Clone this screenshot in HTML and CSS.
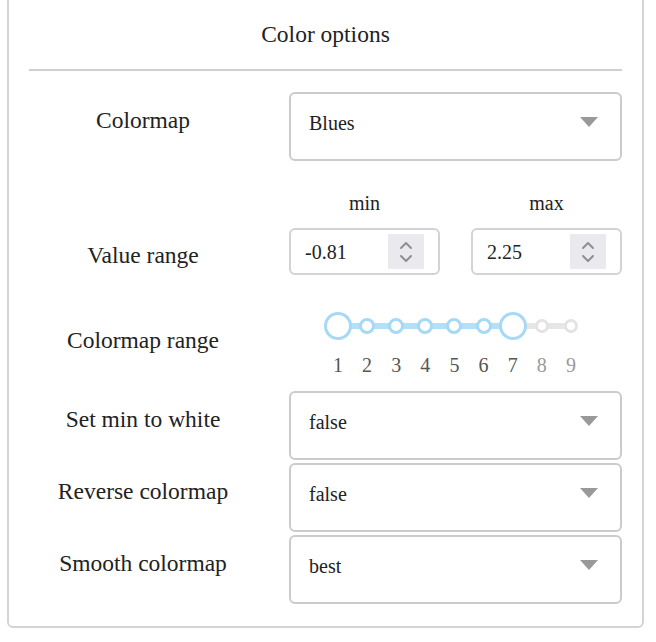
FILE: index.html
```html
<!DOCTYPE html>
<html>
<head>
<meta charset="utf-8">
<link rel="stylesheet" href="styles.css">
</head>
<body>
<div class="panel">
  <div class="title">Color options</div>
  <div class="rule"></div>

  <div class="row row-first">
    <div class="label">Colormap</div>
    <div class="select"><span class="value">Blues</span><span class="caret"></span></div>
  </div>

  <div class="row row-range">
    <div class="label label-range">Value range</div>
    <div class="pair">
      <div class="field">
        <div class="field-label">min</div>
        <div class="number"><span class="num-text">-0.81</span>
          <span class="spin"><svg width="14" height="22" viewBox="0 0 14 22"><path d="M2 7 L7 2 L12 7" fill="none" stroke="#8e8e93" stroke-width="2" stroke-linecap="round" stroke-linejoin="round"/><path d="M2 15 L7 20 L12 15" fill="none" stroke="#8e8e93" stroke-width="2" stroke-linecap="round" stroke-linejoin="round"/></svg></span>
        </div>
      </div>
      <div class="field">
        <div class="field-label">max</div>
        <div class="number"><span class="num-text">2.25</span>
          <span class="spin"><svg width="14" height="22" viewBox="0 0 14 22"><path d="M2 7 L7 2 L12 7" fill="none" stroke="#8e8e93" stroke-width="2" stroke-linecap="round" stroke-linejoin="round"/><path d="M2 15 L7 20 L12 15" fill="none" stroke="#8e8e93" stroke-width="2" stroke-linecap="round" stroke-linejoin="round"/></svg></span>
        </div>
      </div>
    </div>
  </div>

  <div class="row row-slider">
    <div class="label label-slider">Colormap range</div>
    <div class="slider">
      <div class="track"></div>
      <div class="tick"><span class="dot big"></span><span class="n">1</span></div>
      <div class="tick"><span class="dot"></span><span class="n">2</span></div>
      <div class="tick"><span class="dot"></span><span class="n">3</span></div>
      <div class="tick"><span class="dot"></span><span class="n">4</span></div>
      <div class="tick"><span class="dot"></span><span class="n">5</span></div>
      <div class="tick"><span class="dot"></span><span class="n">6</span></div>
      <div class="tick"><span class="dot big"></span><span class="n">7</span></div>
      <div class="tick off"><span class="dot"></span><span class="n">8</span></div>
      <div class="tick off"><span class="dot"></span><span class="n">9</span></div>
    </div>
  </div>

  <div class="row row-after-slider">
    <div class="label">Set min to white</div>
    <div class="select"><span class="value">false</span><span class="caret"></span></div>
  </div>

  <div class="row row-tight">
    <div class="label">Reverse colormap</div>
    <div class="select"><span class="value">false</span><span class="caret"></span></div>
  </div>

  <div class="row row-tight">
    <div class="label">Smooth colormap</div>
    <div class="select"><span class="value">best</span><span class="caret"></span></div>
  </div>
</div>
</body>
</html>
```

FILE: styles.css
```css
html, body {
  margin: 0;
  padding: 0;
  background: #fff;
}

body {
  font-family: "Liberation Serif", "Times New Roman", serif;
  color: #222;
}

.panel {
  margin: -20px 12px 0 7px;
  border: 2px solid #d4d4d4;
  border-radius: 6px;
  padding: 38px 20px 22px;
}

.title {
  font-size: 23.5px;
  line-height: 28px;
  text-align: center;
  color: #222;
}

.rule {
  height: 2px;
  background: #cfcfcf;
  margin-top: 21px;
}

.row {
  display: grid;
  grid-template-columns: 228px 333px;
  column-gap: 32px;
  align-items: start;
}

.row-first { margin-top: 21px; }
.row-range { margin-top: 30px; }
.row-slider { margin-top: 37px; }
.row-after-slider { margin-top: 14px; }
.row-tight { margin-top: 3px; }

.label {
  font-size: 23.5px;
  line-height: 28px;
  text-align: center;
  padding-top: 14px;
  color: #222;
  white-space: nowrap;
}

.label-range { padding-top: 50px; }
.label-slider { padding-top: 14px; }

.select {
  box-sizing: border-box;
  height: 69px;
  border: 2px solid #cbcbcb;
  border-radius: 6px;
  padding: 17px 22px 0 18px;
  display: flex;
  justify-content: space-between;
  align-items: flex-start;
}

.value {
  font-size: 20px;
  line-height: 24px;
  color: #222;
}

.caret {
  margin-top: 6px;
  width: 0;
  height: 0;
  border-left: 9px solid transparent;
  border-right: 9px solid transparent;
  border-top: 10px solid #999;
}

.pair {
  display: grid;
  grid-template-columns: 151px 151px;
  justify-content: space-between;
}

.field-label {
  font-size: 20px;
  line-height: 24px;
  text-align: center;
  color: #222;
}

.number {
  box-sizing: border-box;
  margin-top: 13px;
  height: 47px;
  border: 2px solid #d2d2d7;
  border-radius: 6px;
  padding: 4px 14px 4px 14px;
  display: flex;
  align-items: center;
  justify-content: space-between;
}

.num-text {
  font-size: 20px;
  line-height: 24px;
  color: #222;
}

.spin {
  width: 36px;
  height: 35px;
  background: #e9e9ee;
  display: flex;
  align-items: center;
  justify-content: center;
}

.slider {
  position: relative;
  display: grid;
  grid-template-columns: repeat(9, 29.125px);
  justify-self: start;
  width: max-content;
  margin-left: 34.4px;
}

.track {
  position: absolute;
  left: 14.56px;
  right: 14.56px;
  top: 11px;
  height: 6px;
  background: linear-gradient(to right, #b2e0f8 0, #b2e0f8 75%, #e6e6e6 75%, #e6e6e6 100%);
}

.tick {
  position: relative;
  display: flex;
  flex-direction: column;
  align-items: center;
}

.dot {
  box-sizing: border-box;
  width: 16px;
  height: 16px;
  margin-top: 6px;
  margin-bottom: 6px;
  border: 3.5px solid #a6d9f6;
  border-radius: 50%;
  background: #fff;
}

.dot.big {
  width: 28px;
  height: 28px;
  margin-top: 0;
  margin-bottom: 0;
  border-width: 3.5px;
}

.off .dot {
  width: 14px;
  height: 14px;
  margin-top: 7px;
  margin-bottom: 7px;
  border: 3px solid #e3e3e3;
}

.n {
  margin-top: 13px;
  font-size: 20px;
  line-height: 24px;
  color: #555;
}

.off .n {
  color: #9a9a9a;
}
```
